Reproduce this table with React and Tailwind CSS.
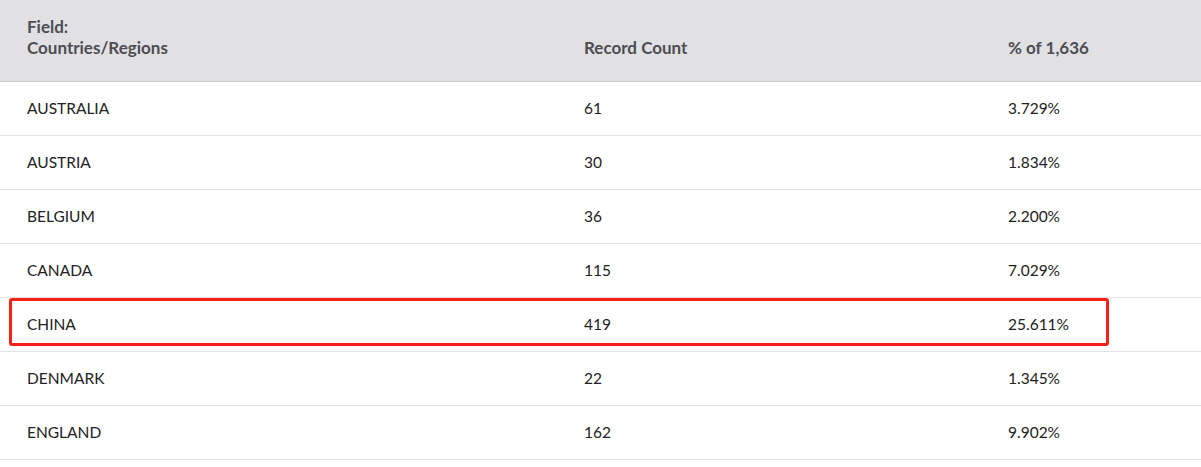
import React from "react";

const rows = [
  { name: "AUSTRALIA", count: 61, pct: "3.729%" },
  { name: "AUSTRIA", count: 30, pct: "1.834%" },
  { name: "BELGIUM", count: 36, pct: "2.200%" },
  { name: "CANADA", count: 115, pct: "7.029%" },
  { name: "CHINA", count: 419, pct: "25.611%", marked: true },
  { name: "DENMARK", count: 22, pct: "1.345%" },
  { name: "ENGLAND", count: 162, pct: "9.902%" },
];

export default function App() {
  return (
    <div className="w-[1201px] h-[467px] bg-white font-['Lato','Noto_Sans',sans-serif] text-[15.5px] text-[#222]">
      <div className="grid grid-cols-[557px_424px_1fr] h-[82px] bg-[#e1e1e4] border-b border-[#c9c9cc] text-[17px] font-bold text-[#4d4d52] leading-[21px]">
        <div className="px-[27px] pt-[16px]">
          Field:
          <br />
          Countries/Regions
        </div>
        <div className="px-[27px] pt-[37px]">Record Count</div>
        <div className="px-[27px] pt-[37px]">% of 1,636</div>
      </div>
      {rows.map((r) => (
        <div
          key={r.name}
          className="relative grid grid-cols-[557px_424px_1fr] h-[54px] items-center border-b border-[#e2e2e2]"
        >
          <div className="px-[27px]">{r.name}</div>
          <div className="px-[27px]">{r.count}</div>
          <div className="px-[27px]">{r.pct}</div>
          {r.marked && (
            <div className="absolute left-[9px] top-0 w-[1100px] h-[48px] border-[3px] border-[#f7201a] rounded-[3px]" />
          )}
        </div>
      ))}
    </div>
  );
}
